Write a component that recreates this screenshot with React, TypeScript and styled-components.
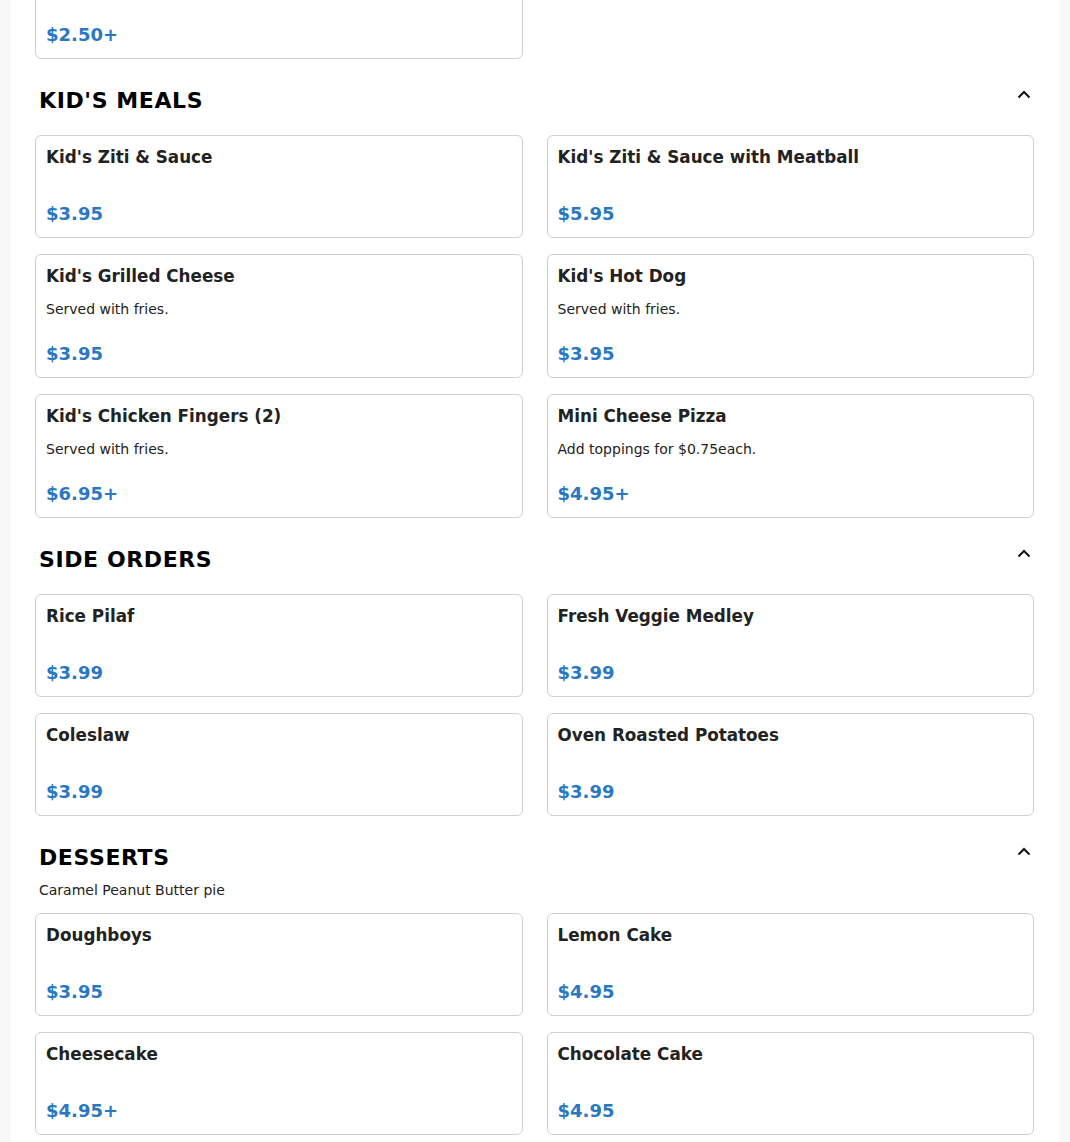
import React from "react";
import styled, { createGlobalStyle } from "styled-components";

interface MenuItem {
  name: string;
  desc?: string;
  price: string;
}

interface MenuSection {
  title?: string;
  note?: string;
  items: MenuItem[];
}

const sections: MenuSection[] = [
  {
    items: [{ name: "", price: "$2.50+" }],
  },
  {
    title: "KID'S MEALS",
    items: [
      { name: "Kid's Ziti & Sauce", price: "$3.95" },
      { name: "Kid's Ziti & Sauce with Meatball", price: "$5.95" },
      { name: "Kid's Grilled Cheese", desc: "Served with fries.", price: "$3.95" },
      { name: "Kid's Hot Dog", desc: "Served with fries.", price: "$3.95" },
      { name: "Kid's Chicken Fingers (2)", desc: "Served with fries.", price: "$6.95+" },
      { name: "Mini Cheese Pizza", desc: "Add toppings for $0.75each.", price: "$4.95+" },
    ],
  },
  {
    title: "SIDE ORDERS",
    items: [
      { name: "Rice Pilaf", price: "$3.99" },
      { name: "Fresh Veggie Medley", price: "$3.99" },
      { name: "Coleslaw", price: "$3.99" },
      { name: "Oven Roasted Potatoes", price: "$3.99" },
    ],
  },
  {
    title: "DESSERTS",
    note: "Caramel Peanut Butter pie",
    items: [
      { name: "Doughboys", price: "$3.95" },
      { name: "Lemon Cake", price: "$4.95" },
      { name: "Cheesecake", price: "$4.95+" },
      { name: "Chocolate Cake", price: "$4.95" },
    ],
  },
];

const GlobalStyle = createGlobalStyle`
  * {
    box-sizing: border-box;
  }
  body {
    margin: 0;
    background: #f8f8f8;
    font-family: "DejaVu Sans", "Liberation Sans", sans-serif;
    overflow: hidden;
  }
`;

const Page = styled.div`
  margin: 0 11px;
  background: #fff;
  padding: 0 25px 40px 24px;
  height: 1142px;
  overflow: hidden;
`;

const Scroller = styled.div`
  margin-top: -44px;
`;

const Section = styled.section`
  margin-top: 28px;
  &:first-child {
    margin-top: 0;
  }
`;

const SectionHeader = styled.div`
  display: flex;
  justify-content: space-between;
  align-items: flex-start;
  padding: 0 0 0 4px;
`;

const SectionTitle = styled.h2`
  margin: 0;
  font-size: 22px;
  line-height: 28px;
  font-weight: 700;
  letter-spacing: 0.6px;
  color: #000;
`;

const Toggle = styled.button`
  border: 0;
  background: none;
  padding: 0;
  margin: 0;
  width: 20px;
  height: 14px;
  display: flex;
  align-items: center;
  justify-content: center;
  color: #111;
  cursor: pointer;
`;

const SectionNote = styled.p`
  margin: 8px 0 0 4px;
  font-size: 14px;
  line-height: 20px;
  color: #222;
`;

const Grid = styled.div<{ $hasNote: boolean; $headless: boolean }>`
  display: grid;
  grid-template-columns: 1fr 1fr;
  column-gap: 24px;
  row-gap: 16px;
  margin-top: ${(p) => (p.$headless ? 0 : p.$hasNote ? 13 : 20)}px;
`;

const Card = styled.div`
  border: 1px solid #cfcfcf;
  border-radius: 6px;
  padding: 10px 10px 11px;
  display: flex;
  flex-direction: column;
  background: #fff;
`;

const ItemName = styled.h3`
  margin: 0;
  font-size: 16.8px;
  line-height: 22px;
  font-weight: 700;
  color: #222;
  min-height: 22px;
`;

const ItemDesc = styled.p`
  margin: 12px 0 0;
  font-size: 14px;
  line-height: 20px;
  color: #222;
`;

const Price = styled.div<{ $afterDesc: boolean }>`
  margin-top: ${(p) => (p.$afterDesc ? 23 : 34)}px;
  font-size: 18px;
  line-height: 24px;
  font-weight: 700;
  color: #2a78c2;
`;

const ChevronUp = () => (
  <svg width="14" height="9" viewBox="0 0 14 9" fill="none">
    <path d="M1.5 7.5L7 2l5.5 5.5" stroke="currentColor" strokeWidth="2" />
  </svg>
);

const App: React.FC = () => {
  return (
    <>
      <GlobalStyle />
      <Page>
        <Scroller>
          {sections.map((section, index) => (
            <Section key={index}>
              {section.title && (
                <SectionHeader>
                  <SectionTitle>{section.title}</SectionTitle>
                  <Toggle aria-label="Collapse section">
                    <ChevronUp />
                  </Toggle>
                </SectionHeader>
              )}
              {section.note && <SectionNote>{section.note}</SectionNote>}
              <Grid $hasNote={!!section.note} $headless={!section.title}>
                {section.items.map((item, i) => (
                  <Card key={i}>
                    <ItemName>{item.name}</ItemName>
                    {item.desc && <ItemDesc>{item.desc}</ItemDesc>}
                    <Price $afterDesc={!!item.desc}>{item.price}</Price>
                  </Card>
                ))}
              </Grid>
            </Section>
          ))}
        </Scroller>
      </Page>
    </>
  );
};

export default App;
